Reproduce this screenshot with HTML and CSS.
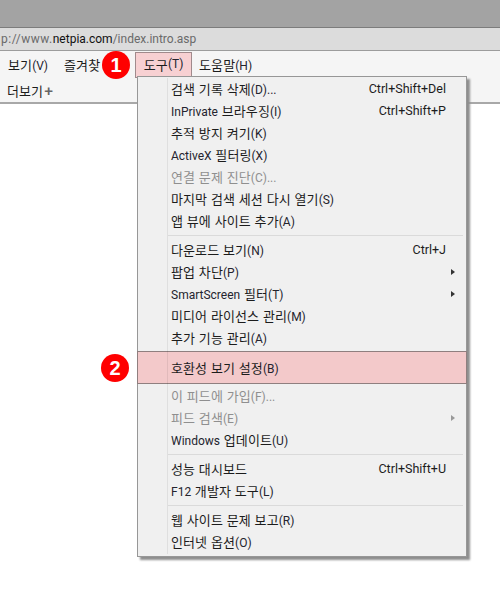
FILE: index.html
```html
<!DOCTYPE html>
<html lang="ko">
<head>
<meta charset="utf-8">
<title>도구 메뉴</title>
<link rel="stylesheet" href="styles.css">
</head>
<body>
<div class="titlebar"></div>
<div class="address"><span class="url"><span class="pre">p://www.</span><b>netpia.com</b>/index.intro.asp</span></div>
<div class="menubar">
  <span class="mi mi-view">보기<span class="l">(V)</span></span>
  <span class="mi mi-fav">즐겨찾</span>
  <span class="mi mi-tools">도구<span class="l">(T)</span></span>
  <span class="mi mi-help">도움말<span class="l">(H)</span></span>
</div>
<div class="cmdbar"><span class="more">더보기</span><span class="plus">+</span></div>
<div class="badge badge-1">1</div>
<div class="badge badge-2">2</div>
<div class="menu">
  <div class="row"><span>검색 기록 삭제<span class="l">(D)...</span></span><span class="key">Ctrl+Shift+Del</span></div>
  <div class="row"><span><span class="l">InPrivate</span> 브라우징<span class="l">(I)</span></span><span class="key">Ctrl+Shift+P</span></div>
  <div class="row"><span>추적 방지 켜기<span class="l">(K)</span></span></div>
  <div class="row"><span><span class="l">ActiveX</span> 필터링<span class="l">(X)</span></span></div>
  <div class="row off"><span>연결 문제 진단<span class="l">(C)...</span></span></div>
  <div class="row"><span>마지막 검색 세션 다시 열기<span class="l">(S)</span></span></div>
  <div class="row"><span>앱 뷰에 사이트 추가<span class="l">(A)</span></span></div>
  <div class="sep"></div>
  <div class="row"><span>다운로드 보기<span class="l">(N)</span></span><span class="key">Ctrl+J</span></div>
  <div class="row"><span>팝업 차단<span class="l">(P)</span></span><i class="arrow"></i></div>
  <div class="row"><span><span class="l">SmartScreen</span> 필터<span class="l">(T)</span></span><i class="arrow"></i></div>
  <div class="row"><span>미디어 라이선스 관리<span class="l">(M)</span></span></div>
  <div class="row"><span>추가 기능 관리<span class="l">(A)</span></span></div>
  <div class="row hot"><span>호환성 보기 설정<span class="l">(B)</span></span></div>
  <div class="row off"><span>이 피드에 가입<span class="l">(F)...</span></span></div>
  <div class="row off"><span>피드 검색<span class="l">(E)</span></span><i class="arrow arrow-off"></i></div>
  <div class="row"><span><span class="l">Windows</span> 업데이트<span class="l">(U)</span></span></div>
  <div class="sep"></div>
  <div class="row"><span>성능 대시보드</span><span class="key">Ctrl+Shift+U</span></div>
  <div class="row"><span><span class="l">F12</span> 개발자 도구<span class="l">(L)</span></span></div>
  <div class="sep"></div>
  <div class="row"><span>웹 사이트 문제 보고<span class="l">(R)</span></span></div>
  <div class="row"><span>인터넷 옵션<span class="l">(O)</span></span></div>
  <div class="gutter"></div>
</div>
</body>
</html>
```
FILE: styles.css
```css
* { box-sizing: border-box; }
html, body { margin: 0; padding: 0; height: 100%; overflow: hidden; background: #fff; }
body { position: relative; font-family: "Noto Sans CJK KR", "Liberation Sans", sans-serif; font-size: 13px; letter-spacing: 0.1px; color: #1c1c1c; }
.l { font-family: Roboto, "Liberation Sans", sans-serif; font-size: 12px; letter-spacing: 0; color: #24242e; }
.titlebar { height: 28px; background: #a3a3a3; border-bottom: 1px solid #7c7c7c; }
.address { height: 23px; background: #dcdcdc; border-bottom: 1px solid #9c9c9c; display: flex; align-items: center; overflow: hidden; }
.url { font: 12px Roboto, sans-serif; letter-spacing: 0; color: #6a6a6a; white-space: nowrap; margin-left: 1px; }
.pre { letter-spacing: 0.5px; }
.url b { font-weight: normal; color: #111; }
.menubar { height: 28px; background: #f5f5f5; display: flex; align-items: center; padding-bottom: 1px; }
.mi { white-space: nowrap; }
.mi-view { margin-left: 8px; }
.mi-fav { margin-left: 16px; width: 71px; }
.mi-tools { width: 57px; height: 26px; background: #f7d0d2; border: 1px solid #a08a8c; display: flex; align-items: center; justify-content: center; padding-bottom: 1px; }
.mi-help { margin-left: 7px; }
.cmdbar { height: 25px; background: #f5f5f5; border-bottom: 2px solid #a8a8a8; display: flex; align-items: center; padding-left: 7px; padding-bottom: 1px; }
.plus { color: #666; font: bold 15px "Liberation Sans", sans-serif; margin-left: 1px; }
.badge { position: absolute; width: 28px; height: 28px; border-radius: 50%; background: #f00; color: #fff; font: bold 20px/28px "Liberation Sans", sans-serif; letter-spacing: 0; text-align: center; }
.badge-1 { left: 102px; top: 51px; }
.badge-2 { left: 101px; top: 354px; }
.menu { position: absolute; left: 137px; top: 76px; width: 330px; height: 481px; background: #f0f0f0; border: 1px solid #979797; box-shadow: 3px 3px 2px #8e8e8e; padding: 1px 2px 0; display: flex; flex-direction: column; }
.gutter { position: absolute; left: 29px; top: 1px; bottom: 2px; width: 1px; background: rgba(0, 0, 0, 0.07); z-index: 2; }
.row { position: relative; height: 22px; flex: none; display: flex; align-items: center; padding-left: 31px; padding-bottom: 1px; white-space: nowrap; }
.key { font-family: Roboto, "Liberation Sans", sans-serif; font-size: 12.5px; letter-spacing: 0; position: absolute; right: 18px; }
.off, .off .l { color: #8f8f8f; }
.sep { height: 1px; background: #dadada; margin: 3px 1px 3px 28px; flex: none; }
.hot { background: #f3c9ca; border: 1px solid #8f7f7f; height: 33px; width: 330px; margin: 2px -3px 1px; padding-left: 33px; z-index: 1; }
.arrow { position: absolute; right: 9px; width: 0; height: 0; border-left: 4px solid #333; border-top: 3.5px solid transparent; border-bottom: 3.5px solid transparent; }
.arrow-off { border-left-color: #999; }
```
